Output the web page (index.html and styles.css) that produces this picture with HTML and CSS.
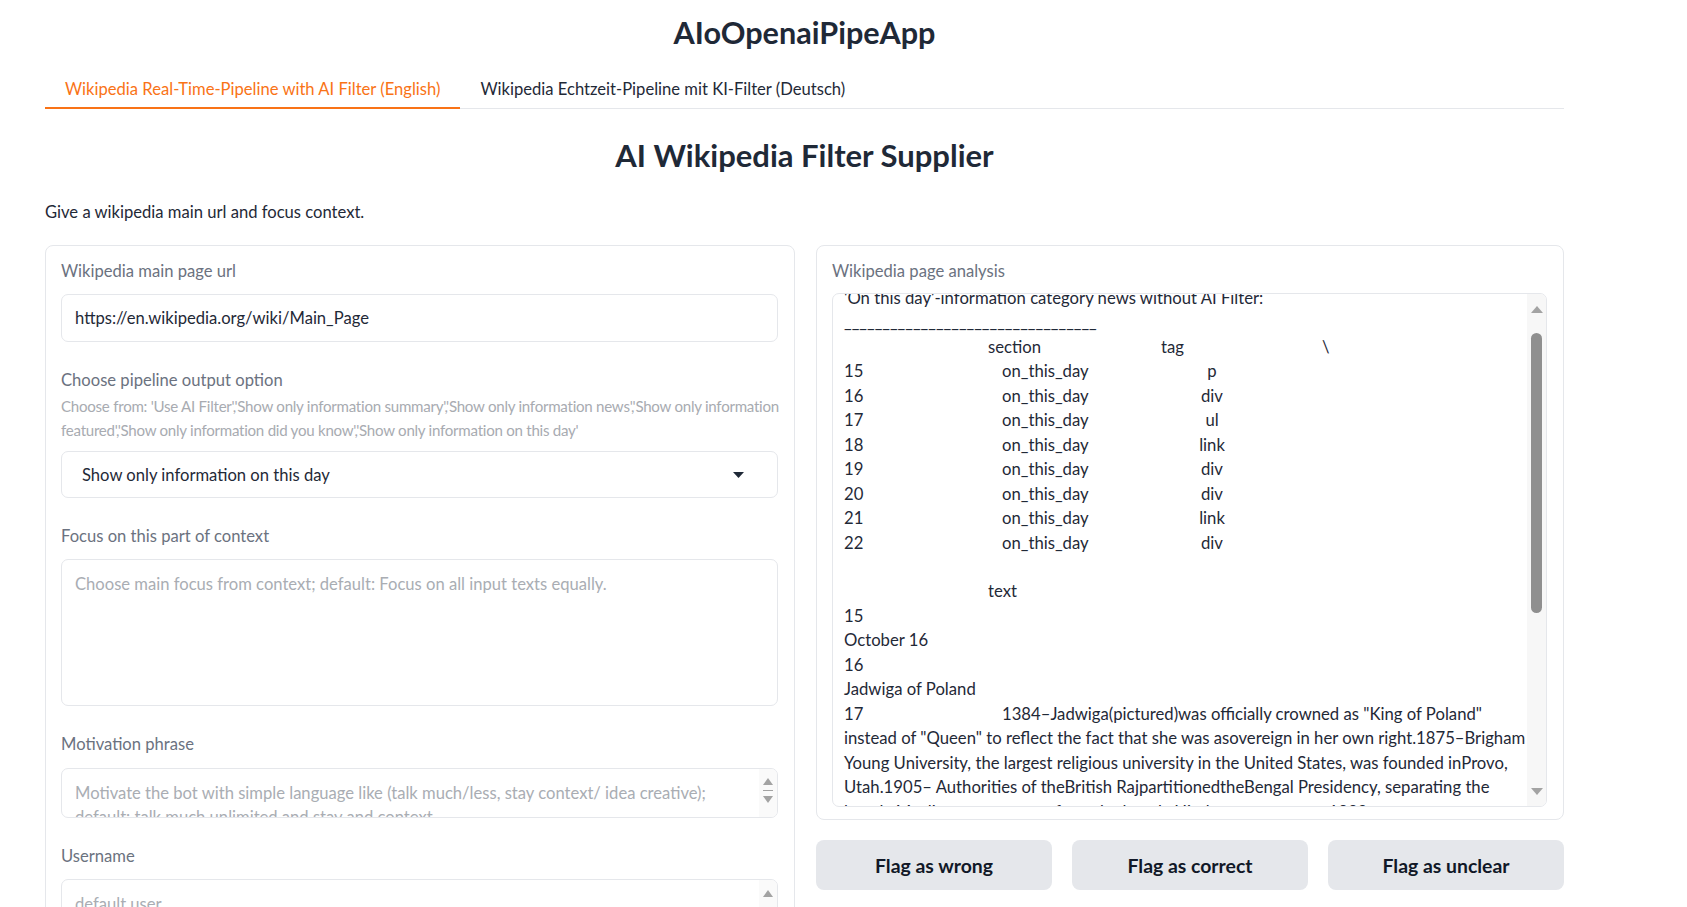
FILE: index.html
```html
<!DOCTYPE html>
<html lang="en">
<head>
<meta charset="utf-8">
<title>AIoOpenaiPipeApp</title>
<link rel="stylesheet" href="styles.css">
</head>
<body>
<div class="app">
  <h1 class="title">AIoOpenaiPipeApp</h1>
  <div class="tabs">
    <button class="tab active">Wikipedia Real-Time-Pipeline with AI Filter (English)</button>
    <button class="tab">Wikipedia Echtzeit-Pipeline mit KI-Filter (Deutsch)</button>
  </div>
  <h1 class="heading">AI Wikipedia Filter Supplier</h1>
  <p class="intro">Give a wikipedia main url and focus context.</p>

  <div class="columns">
    <div class="panel left-panel">
      <div class="field">
        <div class="label">Wikipedia main page url</div>
        <div class="box input-box">https://en.wikipedia.org/wiki/Main_Page</div>
      </div>
      <div class="field">
        <div class="label label-tight">Choose pipeline output option</div>
        <div class="info">Choose from: 'Use AI Filter','Show only information summary','Show only information news','Show only information<br>featured','Show only information did you know','Show only information on this day'</div>
        <div class="box dropdown">
          <span>Show only information on this day</span>
          <svg class="caret" width="11" height="6" viewBox="0 0 11 6"><path d="M0 0H11L5.5 6Z" fill="#1f2937"/></svg>
        </div>
      </div>
      <div class="field">
        <div class="label">Focus on this part of context</div>
        <div class="box textarea-big placeholder">Choose main focus from context; default: Focus on all input texts equally.</div>
      </div>
      <div class="field">
        <div class="label label-mid">Motivation phrase</div>
        <div class="box scroll-box motivation">
          <div class="scroll-text placeholder">Motivate the bot with simple language like (talk much/less, stay context/ idea creative); default: talk much unlimited and stay and context</div>
          <div class="mini-bar">
            <svg width="10" height="7" viewBox="0 0 10 7"><path d="M0 7H10L5 0Z" fill="#a3a3a3"/></svg>
            <span class="mini-thumb"></span>
            <svg width="10" height="7" viewBox="0 0 10 7"><path d="M0 0H10L5 7Z" fill="#a3a3a3"/></svg>
          </div>
        </div>
      </div>
      <div class="field">
        <div class="label">Username</div>
        <div class="box scroll-box username">
          <div class="scroll-text placeholder">default user</div>
          <div class="mini-bar mini-top">
            <svg width="10" height="7" viewBox="0 0 10 7"><path d="M0 7H10L5 0Z" fill="#a3a3a3"/></svg>
          </div>
        </div>
      </div>
    </div>

    <div class="right-col">
      <div class="panel right-panel">
        <div class="label label-out">Wikipedia page analysis</div>
        <div class="box output">
          <div class="out-lines">
            <div class="ln">'On this day'-information category news without AI Filter:</div>
            <div class="ln">_________________________________</div>
            <div class="ln row"><span class="h1c"></span><span class="h2c">section</span><span class="h3c">tag</span><span>\</span></div>
            <div class="ln row"><span class="idx">15</span><span class="sec">on_this_day</span><span class="tagc">p</span></div>
            <div class="ln row"><span class="idx">16</span><span class="sec">on_this_day</span><span class="tagc">div</span></div>
            <div class="ln row"><span class="idx">17</span><span class="sec">on_this_day</span><span class="tagc">ul</span></div>
            <div class="ln row"><span class="idx">18</span><span class="sec">on_this_day</span><span class="tagc">link</span></div>
            <div class="ln row"><span class="idx">19</span><span class="sec">on_this_day</span><span class="tagc">div</span></div>
            <div class="ln row"><span class="idx">20</span><span class="sec">on_this_day</span><span class="tagc">div</span></div>
            <div class="ln row"><span class="idx">21</span><span class="sec">on_this_day</span><span class="tagc">link</span></div>
            <div class="ln row"><span class="idx">22</span><span class="sec">on_this_day</span><span class="tagc">div</span></div>
            <div class="ln">&nbsp;</div>
            <div class="ln row"><span class="h1c"></span><span>text</span></div>
            <div class="ln">15</div>
            <div class="ln">October 16</div>
            <div class="ln">16</div>
            <div class="ln">Jadwiga of Poland</div>
            <div class="ln row"><span class="idx">17</span><span>1384–Jadwiga(pictured)was officially crowned as "King of Poland"</span></div>
            <div class="ln">instead of "Queen" to reflect the fact that she was asovereign in her own right.1875–Brigham</div>
            <div class="ln">Young University, the largest religious university in the United States, was founded inProvo,</div>
            <div class="ln">Utah.1905– Authorities of theBritish RajpartitionedtheBengal Presidency, separating the</div>
            <div class="ln">largely Muslim eastern areas from the largely Hindu western areas.1923–</div>
          </div>
          <div class="vbar">
            <svg width="12" height="7" viewBox="0 0 12 7"><path d="M0 7H12L6 0Z" fill="#a3a3a3"/></svg>
            <span class="thumb"></span>
            <span class="vbar-fill"></span>
            <svg width="12" height="7" viewBox="0 0 12 7"><path d="M0 0H12L6 7Z" fill="#a3a3a3"/></svg>
          </div>
        </div>
      </div>
      <div class="buttons">
        <button class="btn">Flag as wrong</button>
        <button class="btn">Flag as correct</button>
        <button class="btn">Flag as unclear</button>
      </div>
    </div>
  </div>
</div>
</body>
</html>
```

FILE: styles.css
```css
* { box-sizing: border-box; }

html, body {
  margin: 0;
  background: #ffffff;
}

body {
  font-family: "Lato", "Noto Sans", sans-serif;
  font-size: 16.6px;
  line-height: 24px;
  color: #1f2937;
}

.app {
  width: 1519px;
  margin-left: 45px;
  padding-top: 13px;
}

.title,
.heading {
  margin: 0;
  text-align: center;
  font-size: 30.6px;
  line-height: 40px;
  font-weight: 700;
  color: #1f2937;
}

.heading {
  font-size: 31px;
  margin-top: 26px;
}

.tabs {
  display: flex;
  margin-top: 18px;
  border-bottom: 1px solid #e5e7eb;
}

.tab {
  font-family: inherit;
  font-size: 16.6px;
  line-height: 24px;
  color: #1f2937;
  background: none;
  border: 0;
  border-bottom: 2px solid transparent;
  margin-bottom: -1px;
  padding: 6px 20px;
  cursor: pointer;
}

.tab.active {
  color: #f97316;
  border-bottom-color: #f97316;
}

.intro {
  margin: 25px 0 0;
  line-height: 24px;
}

.columns {
  margin-top: 21px;
  display: grid;
  grid-template-columns: 750px 748px;
  column-gap: 21px;
  align-items: start;
}

.panel {
  border: 1px solid #e5e7eb;
  border-radius: 8px;
  padding: 13px 16px 12px 15px;
  background: #fff;
}

.left-panel {
  padding-bottom: 40px;
}

.field {
  margin-bottom: 26px;
}

.label {
  color: #6b7280;
  line-height: 24px;
  margin-bottom: 11px;
}

.label-tight {
  margin-bottom: 2px;
}

.label-mid {
  margin-bottom: 12px;
}

.label-out {
  margin-bottom: 10px;
}

.info {
  font-size: 15.1px;
  line-height: 24px;
  letter-spacing: -0.26px;
  white-space: nowrap;
  color: #a8abb1;
  margin-bottom: 9px;
}

.box {
  border: 1px solid #e5e7eb;
  border-radius: 7px;
  background: #fff;
}

.input-box {
  height: 48px;
  padding: 11px 13px;
}

.dropdown {
  height: 47px;
  padding: 0 33px 0 20px;
  display: flex;
  align-items: center;
  justify-content: space-between;
}

.caret {
  display: block;
}

.placeholder {
  color: #a9adb3;
}

.textarea-big {
  height: 147px;
  padding: 12px 13px;
}

.scroll-box {
  display: flex;
  overflow: hidden;
}

.motivation {
  height: 50px;
}

.username {
  height: 60px;
}

.scroll-text {
  flex: 1;
  padding: 12px 13px 0;
  overflow: hidden;
}

.mini-bar {
  width: 18px;
  background: #fafafa;
  display: flex;
  flex-direction: column;
  align-items: center;
  padding-top: 9px;
  gap: 5px;
}

.mini-thumb {
  width: 10px;
  height: 1px;
  background: #a3a3a3;
}

.mini-top {
  padding-top: 10px;
}

.output {
  height: 514px;
  display: flex;
  overflow: hidden;
}

.out-lines {
  flex: 1;
  padding-left: 11px;
  margin-top: -8px;
  font-size: 16.7px;
  line-height: 24.45px;
  color: #1f2937;
  white-space: nowrap;
  overflow: hidden;
}

.row {
  display: flex;
}

.idx { width: 158px; }
.sec { width: 180px; }
.tagc { width: 60px; text-align: center; }
.h1c { width: 144px; }
.h2c { width: 173px; }
.h3c { width: 161px; }

.vbar {
  width: 19px;
  background: #f7f7f7;
  display: flex;
  flex-direction: column;
  align-items: center;
  padding: 12px 0 11px;
}

.thumb {
  width: 11px;
  height: 280px;
  margin-top: 20px;
  border-radius: 6px;
  background: #8f8f8f;
}

.vbar-fill {
  flex: 1;
}

.buttons {
  margin-top: 20px;
  display: grid;
  grid-template-columns: repeat(3, 1fr);
  gap: 20px;
}

.btn {
  height: 50px;
  border: 0;
  border-radius: 8px;
  background: #e5e7eb;
  font-family: inherit;
  font-size: 19.4px;
  font-weight: 700;
  color: #111827;
  cursor: pointer;
}
```
